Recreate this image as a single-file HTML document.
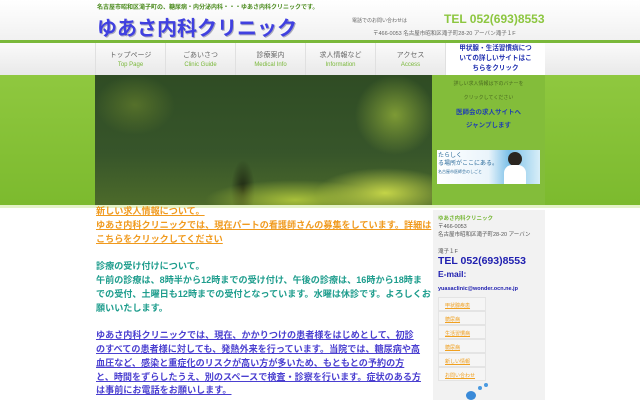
<!DOCTYPE html>
<html><head><meta charset="utf-8"><style>
*{margin:0;padding:0;box-sizing:border-box}
body{width:640px;height:400px;overflow:hidden;background:#fff;font-family:"Liberation Sans","Noto Sans CJK JP",sans-serif;position:relative}
.abs{position:absolute}
.hdr{left:0;top:0;width:640px;height:40px;background:linear-gradient(#fff,#f1f1f1)}
.gl{left:0;top:40px;width:640px;height:3px;background:#7ab83a}
.nav{left:0;top:43px;width:640px;height:32px;background:linear-gradient(#fafafa,#e9e9e9)}
.ni{top:43px;height:32px;width:70px;text-align:center;border-left:1px solid #e0e0e0;font-size:7px;color:#666;line-height:9px;padding-top:8px}
.ni span{color:#7ab83a;font-size:6px}
.band{left:0;top:75px;width:640px;height:130px;background:linear-gradient(#8fc83f,#7cba2e)}
.hero{left:95px;top:75px;width:337px;height:130px;background:
radial-gradient(ellipse 70px 25px at 290px 118px,#c4d448 0%,rgba(196,212,72,0) 100%),
radial-gradient(ellipse 90px 20px at 200px 125px,#a8c03a 0%,rgba(168,192,58,0) 100%),
radial-gradient(ellipse 40px 40px at 300px 40px,#7d9a35 0%,rgba(125,154,53,0) 100%),
radial-gradient(ellipse 40px 30px at 40px 30px,#55702a 0%,rgba(85,112,42,0) 100%),
radial-gradient(ellipse 12px 30px at 148px 115px,#1c2412 0%,rgba(28,36,18,0) 100%),
linear-gradient(#2f4c24,#37552a 60%,#4c6a2a)}
.side{left:432px;top:75px;width:113px;height:130px;background:#83bd3a}
.sb{left:433px;top:210px;width:112px;height:190px;background:#f2f2f2}
.mt{left:96px;top:205px;width:340px;font-size:9.1px;font-weight:bold;line-height:13.8px;white-space:nowrap}
.o{color:#f09a1e;text-decoration:underline}
.t{color:#1e9d8d}
.b{color:#4a3fd0;text-decoration:underline}
.lk{left:438px;width:48px;height:13.5px;border:1px solid #e4e4e4;background:#f5f5f5;font-size:5px;color:#f0a020;text-decoration:underline;padding:4px 0 0 6px}
</style></head><body>
<div class="abs hdr"></div>
<div class="abs" style="left:97px;top:2px;font-size:6px;color:#4a8a1c;font-weight:bold">名古屋市昭和区滝子町の、糖尿病・内分泌内科・・・ゆあさ内科クリニックです。</div>
<div class="abs" style="left:97px;top:12px;font-size:20px;font-weight:bold;color:#4040e0;text-shadow:1px 1px 0 #aab,0 0 2px #fff">ゆあさ内科クリニック</div>
<div class="abs" style="left:352px;top:17px;font-size:5px;color:#666">電話でのお問い合わせは</div>
<div class="abs" style="left:444px;top:12px;font-size:12px;font-weight:bold;color:#8cc63f">TEL 052(693)8553</div>
<div class="abs" style="left:373px;top:29px;font-size:5.5px;color:#666">〒466-0053 名古屋市昭和区滝子町28-20 アーバン滝子１F</div>
<div class="abs gl"></div>
<div class="abs nav"></div>
<div class="abs ni" style="left:95px">トップページ<br><span>Top Page</span></div>
<div class="abs ni" style="left:165px">ごあいさつ<br><span>Clinic Guide</span></div>
<div class="abs ni" style="left:235px">診療案内<br><span>Medical Info</span></div>
<div class="abs ni" style="left:305px">求人情報など<br><span>Information</span></div>
<div class="abs ni" style="left:375px">アクセス<br><span>Access</span></div>
<div class="abs" style="left:445px;top:43px;width:100px;height:32px;background:#fff;border-left:1px solid #e0e0e0;text-align:center;font-size:6.6px;font-weight:bold;color:#2030b0;line-height:10px;padding-top:1px">甲状腺・生活習慣病につ<br>いての詳しいサイトはこ<br>ちらをクリック</div>
<div class="abs band"></div>
<div class="abs hero"></div>
<div class="abs side"></div>
<div class="abs" style="left:432px;top:75px;width:113px;text-align:center;font-size:5px;color:#4a6a20;line-height:14px;padding-top:2px">詳しい求人情報は下のバナーを<br>クリックしてください</div>
<div class="abs" style="left:432px;top:106px;width:113px;text-align:center;font-size:6.5px;font-weight:bold;color:#2040b0;line-height:13px">医師会の求人サイトへ<br>ジャンプします</div>
<div class="abs" style="left:437px;top:150px;width:103px;height:34px;background:linear-gradient(90deg,#fff 0,#eaf4fb 50%,#7bc0e8 70%,#d8eef8 100%)"></div>
<div class="abs" style="left:438px;top:152px;font-size:6px;color:#2a6a9a;line-height:8px">たらしく<br>る場所がここにある。<br><span style="font-size:4px">名古屋市医師会のしごと</span></div>
<div class="abs" style="left:508px;top:152px;width:14px;height:14px;border-radius:50%;background:#2a2520"></div>
<div class="abs" style="left:504px;top:165px;width:22px;height:19px;border-radius:8px 8px 0 0;background:#fff"></div>
<div class="abs" style="left:0;top:205px;width:640px;height:3px;background:#e4f2c8"></div>
<div class="abs mt">
<div class="o">新しい求人情報について。<br>ゆあさ内科クリニックでは、現在パートの看護師さんの募集をしています。詳細は<br>こちらをクリックしてください</div>
<div style="height:13.8px"></div>
<div class="t">診療の受け付けについて。<br>午前の診療は、8時半から12時までの受け付け、午後の診療は、16時から18時ま<br>での受付、土曜日も12時までの受付となっています。水曜は休診です。よろしくお<br>願いいたします。</div>
<div style="height:13.8px"></div>
<div class="b">ゆあさ内科クリニックでは、現在、かかりつけの患者様をはじめとして、初診<br>のすべての患者様に対しても、発熱外来を行っています。当院では、糖尿病や高<br>血圧など、感染と重症化のリスクが高い方が多いため、もともとの予約の方<br>と、時間をずらしたうえ、別のスペースで検査・診察を行います。症状のある方<br>は事前にお電話をお願いします。</div>
</div>
<div class="abs sb"></div>
<div class="abs" style="left:438px;top:214px;font-size:5.5px;color:#7ab83a;font-weight:bold">ゆあさ内科クリニック</div>
<div class="abs" style="left:438px;top:223px;font-size:5.5px;color:#555;line-height:8px">〒466-0053<br>名古屋市昭和区滝子町28-20 アーバン</div>
<div class="abs" style="left:438px;top:247px;font-size:5.5px;color:#555">滝子１F</div>
<div class="abs" style="left:438px;top:255px;font-size:10.5px;font-weight:bold;color:#2020b0">TEL 052(693)8553</div>
<div class="abs" style="left:438px;top:269px;font-size:8.5px;font-weight:bold;color:#2020b0">E-mail:</div>
<div class="abs" style="left:438px;top:286px;font-size:5.5px;font-weight:bold;color:#2020b0">yuasaclinic@wonder.ocn.ne.jp</div>
<div class="abs lk" style="top:297px">甲状腺疾患</div>
<div class="abs lk" style="top:311px">糖尿病</div>
<div class="abs lk" style="top:325px">生活習慣病</div>
<div class="abs lk" style="top:339px">糖尿病</div>
<div class="abs lk" style="top:353px">新しい情報</div>
<div class="abs lk" style="top:367px">お問い合わせ</div>
<div class="abs" style="left:466px;top:391px;width:10px;height:9px;border-radius:50%;background:#3a8ad8"></div>
<div class="abs" style="left:478px;top:386px;width:4px;height:4px;border-radius:50%;background:#4a9ae0"></div>
<div class="abs" style="left:484px;top:383px;width:4px;height:4px;border-radius:50%;background:#4a9ae0"></div>
</body></html>
